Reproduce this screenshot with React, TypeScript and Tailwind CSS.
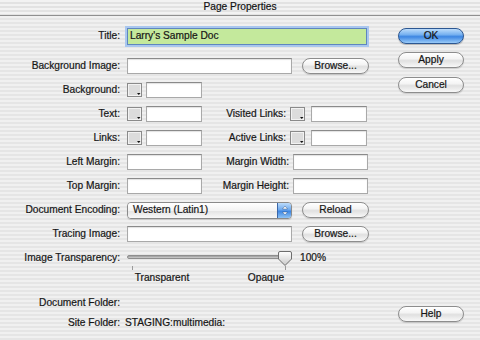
import React from "react";

function Field({ w }: { w: string }) {
  return (
    <div
      className={`${w} h-[16px] border border-[#a9a9a9] border-t-[#8a8a8a] bg-white shadow-[inset_0_1px_1px_rgba(0,0,0,0.12)]`}
    />
  );
}

function Swatch() {
  return (
    <svg width="15" height="14" viewBox="0 0 15 14" className="shrink-0">
      <rect x="0.5" y="0.5" width="14" height="13" fill="#dcdcdc" stroke="#8a8a8a" />
      <rect x="1.5" y="1.5" width="12" height="11" fill="none" stroke="#f2f2f2" />
      <path d="M10 10h3.5l-1.75 2z" fill="#111" />
    </svg>
  );
}

function AquaButton({
  children,
  w = "w-[66px]",
  primary = false,
}: {
  children: React.ReactNode;
  w?: string;
  primary?: boolean;
}) {
  return (
    <div
      className={`${w} h-[16px] shrink-0 rounded-full border flex items-center justify-center leading-none ${
        primary
          ? "border-[#2c5792] bg-[linear-gradient(180deg,#bcdcfb_0%,#76b1f0_40%,#3d86e2_55%,#9acbf8_100%)] shadow-[0_1px_1px_rgba(0,0,0,0.25)]"
          : "border-[#8d8d8d] bg-[linear-gradient(180deg,#ffffff_0%,#f4f4f4_40%,#e0e0e0_55%,#f8f8f8_100%)] shadow-[0_1px_1px_rgba(0,0,0,0.15)]"
      }`}
    >
      {children}
    </div>
  );
}

function Row({
  label,
  children,
  h = "h-[24px]",
}: {
  label: string;
  children?: React.ReactNode;
  h?: string;
}) {
  return (
    <div className={`flex items-center ${h}`}>
      <div className="w-[120px] shrink-0 text-right">{label}</div>
      <div className="ml-[7px] flex items-center">{children}</div>
    </div>
  );
}

function ColorPair({ label, labelW }: { label: string; labelW: string }) {
  return (
    <>
      <Swatch />
      <div className="ml-[4px]">
        <Field w="w-[56px]" />
      </div>
      {label && (
        <>
          <div className={`${labelW} text-right`}>{label}</div>
          <div className="ml-[4px]">
            <Swatch />
          </div>
          <div className="ml-[6px]">
            <Field w="w-[56px]" />
          </div>
        </>
      )}
    </>
  );
}

export default function App() {
  return (
    <div className="w-[480px] h-[340px] overflow-hidden flex flex-col text-[10.2px] leading-none text-[#161616] [-webkit-text-stroke:0.2px_#161616] [font-family:'Liberation_Sans',Arial,sans-serif] bg-[repeating-linear-gradient(180deg,#f0f0f0_0px,#f0f0f0_2px,#e5e5e5_2px,#e5e5e5_4px)]">
      <div className="h-[16px] shrink-0 flex items-center justify-center border-b border-[#8f8f8f] bg-[repeating-linear-gradient(180deg,#f2f2f2_0px,#f2f2f2_2px,#e2e2e2_2px,#e2e2e2_4px)] text-[#111]">
        Page Properties
      </div>

      <div className="flex flex-1">
        <div className="w-[398px] shrink-0 flex flex-col">
          <div className="mt-[8px]">
            <Row label="Title:">
              <div className="w-[240px] h-[17px] flex items-center pl-[2px] border border-[#5f86bf] bg-[#c4e99c] shadow-[0_0_0_2px_#a9c7ee]">
                Larry&apos;s Sample Doc
              </div>
            </Row>
          </div>
          <div className="mt-[6px]">
            <Row label="Background Image:">
              <Field w="w-[165px]" />
              <div className="ml-[10px]">
                <AquaButton w="w-[67px]">Browse...</AquaButton>
              </div>
            </Row>
          </div>
          <Row label="Background:">
            <ColorPair label="" labelW="" />
          </Row>
          <Row label="Text:">
            <ColorPair label="Visited Links:" labelW="w-[84px]" />
          </Row>
          <Row label="Links:">
            <ColorPair label="Active Links:" labelW="w-[84px]" />
          </Row>
          <Row label="Left Margin:">
            <Field w="w-[75px]" />
            <div className="w-[87px] text-right">Margin Width:</div>
            <div className="ml-[4px]">
              <Field w="w-[75px]" />
            </div>
          </Row>
          <Row label="Top Margin:">
            <Field w="w-[75px]" />
            <div className="w-[87px] text-right">Margin Height:</div>
            <div className="ml-[4px]">
              <Field w="w-[75px]" />
            </div>
          </Row>
          <Row label="Document Encoding:">
            <div className="w-[165px] h-[17px] flex rounded-[4px] border border-[#8a8a8a] overflow-hidden shadow-[0_1px_1px_rgba(0,0,0,0.15)]">
              <div className="flex-1 flex items-center pl-[5px] bg-[linear-gradient(180deg,#ffffff_0%,#f3f3f3_50%,#e4e4e4_55%,#f8f8f8_100%)]">
                Western (Latin1)
              </div>
              <div className="w-[14px] border-l border-[#3b67a8] flex items-center justify-center bg-[linear-gradient(180deg,#bcdcfb_0%,#6ea9ee_45%,#3d86e2_55%,#8fc4f6_100%)]">
                <svg width="6" height="11" viewBox="0 0 6 11">
                  <path d="M3 1L5.5 4h-5z" fill="#fff" stroke="#1d3f70" strokeWidth="0.4" />
                  <path d="M3 10L5.5 7h-5z" fill="#fff" stroke="#1d3f70" strokeWidth="0.4" />
                </svg>
              </div>
            </div>
            <div className="ml-[10px]">
              <AquaButton w="w-[67px]">Reload</AquaButton>
            </div>
          </Row>
          <Row label="Tracing Image:">
            <Field w="w-[165px]" />
            <div className="ml-[10px]">
              <AquaButton w="w-[67px]">Browse...</AquaButton>
            </div>
          </Row>
          <Row label="Image Transparency:">
            <div className="relative w-[165px] h-[24px]">
              <div className="absolute left-0 right-[6px] top-[9px] h-[4px] rounded-full border border-[#8e8e8e] bg-[linear-gradient(180deg,#9a9a9a,#cfcfcf)]" />
              <div className="absolute left-[5px] top-[20px] w-px h-[4px] bg-[#9a9a9a]" />
              <div className="absolute left-[158px] top-[20px] w-px h-[4px] bg-[#9a9a9a]" />
              <svg
                className="absolute left-[151px] top-[5px]"
                width="14"
                height="15"
                viewBox="0 0 14 15"
              >
                <defs>
                  <linearGradient id="thumb" x1="0" y1="0" x2="0" y2="1">
                    <stop offset="0" stopColor="#ffffff" />
                    <stop offset="0.5" stopColor="#e4e4e4" />
                    <stop offset="1" stopColor="#c9c9c9" />
                  </linearGradient>
                </defs>
                <path
                  d="M2 0.5h10a1.5 1.5 0 0 1 1.5 1.5v6L7 14.5 0.5 8V2A1.5 1.5 0 0 1 2 0.5z"
                  fill="url(#thumb)"
                  stroke="#6d6d6d"
                />
              </svg>
            </div>
            <div className="ml-[8px]">100%</div>
          </Row>
          <div className="flex items-center h-[16px]">
            <div className="ml-[122px] w-[80px] text-center">Transparent</div>
            <div className="ml-[34px] w-[60px] text-center">Opaque</div>
          </div>
          <div className="mt-[5px]">
            <Row label="Document Folder:" />
          </div>
          <Row label="Site Folder:" h="h-[16px]">
            <span className="-ml-[2px]">STAGING:multimedia:</span>
          </Row>
        </div>

        <div className="w-[66px] flex flex-col pb-[18px]">
          <div className="mt-[12px]">
            <AquaButton primary>OK</AquaButton>
          </div>
          <div className="mt-[8px]">
            <AquaButton>Apply</AquaButton>
          </div>
          <div className="mt-[9px]">
            <AquaButton>Cancel</AquaButton>
          </div>
          <div className="mt-auto">
            <AquaButton>Help</AquaButton>
          </div>
        </div>
      </div>
    </div>
  );
}
